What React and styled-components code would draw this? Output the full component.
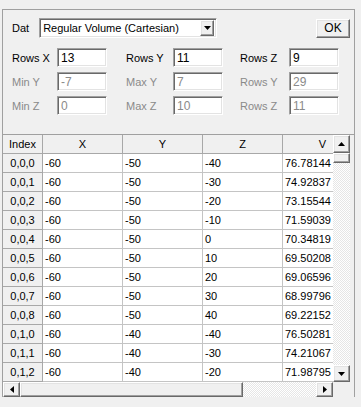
import React from "react";
import styled, { createGlobalStyle } from "styled-components";

const Global = createGlobalStyle`
  html, body {
    margin: 0;
    padding: 0;
    background: #f0f0f0;
    font-family: "Liberation Sans", Arial, sans-serif;
    font-size: 11px;
    color: #000;
  }
`;

const raised = `
  background: #f0f0f0;
  border: 1px solid;
  border-color: #fff #696969 #696969 #fff;
  box-shadow: inset -1px -1px 0 #a0a0a0, inset 1px 1px 0 #e3e3e3;
  box-sizing: border-box;
`;

const sunken = `
  background: #fff;
  border: 1px solid;
  border-color: #a0a0a0 #fff #fff #a0a0a0;
  box-shadow: inset 1px 1px 0 #696969, inset -1px -1px 0 #e3e3e3;
  box-sizing: border-box;
`;

const dither = `
  background: repeating-conic-gradient(#fff 0 25%, #e6e6e6 0 50%) 0 0 / 2px 2px;
`;

const Frame = styled.div`
  margin: 9px 6px 0 2px;
  width: 353px;
  box-sizing: border-box;
  border-top: 1px solid #a0a0a0;
  border-left: 1px solid #a0a0a0;
  border-right: 1px solid #a0a0a0;
  display: flex;
  flex-direction: column;
`;

const TopPanel = styled.div`
  height: 124px;
  box-sizing: border-box;
  padding: 8px 0 0 9px;
  display: flex;
  flex-direction: column;
  gap: 10px;
`;

const HeadRow = styled.div`
  display: flex;
  align-items: center;
`;

const Label = styled.span`
  color: ${(p) => (p.$off ? "#8a8a8a" : "#000")};
  white-space: nowrap;
`;

const Combo = styled.div`
  ${sunken}
  width: 178px;
  height: 20px;
  margin-left: 10px;
  display: flex;
  align-items: center;
  padding: 0 2px 0 3px;
`;

const ComboText = styled.span`
  flex: 1;
`;

const ArrowBtn = styled.div`
  ${raised}
  width: ${(p) => p.$w || 16}px;
  height: ${(p) => p.$h || 16}px;
  display: flex;
  align-items: center;
  justify-content: center;
  flex-shrink: 0;
`;

const OkButton = styled.button`
  ${raised}
  margin-left: auto;
  margin-right: 4px;
  width: 34px;
  height: 19px;
  padding: 0;
  font: inherit;
  font-size: 12px;
  color: #000;
`;

const Fields = styled.div`
  display: grid;
  grid-template-columns: 45px 50px 19px 47px 50px 17px 49px 50px;
  grid-auto-rows: 19px;
  row-gap: 5px;
  align-items: center;
`;

const Input = styled.div`
  ${sunken}
  height: 19px;
  padding: 1px 0 0 3px;
  display: flex;
  align-items: center;
  font-size: 12px;
  color: ${(p) => (p.$off ? "#8a8a8a" : "#000")};
`;

const GridArea = styled.div`
  border-top: 1px solid #a0a0a0;
  display: flex;
  flex-direction: column;
`;

const GridBody = styled.div`
  display: flex;
  height: 247px;
`;

const Viewport = styled.div`
  width: 330px;
  overflow: hidden;
`;

const Row = styled.div`
  display: grid;
  grid-template-columns: 40px 80px 80px 80px 80px;
  width: 360px;
  height: 19px;
`;

const Cell = styled.div`
  box-sizing: border-box;
  border-right: 1px solid ${(p) => (p.$fixed ? "#a8a8a8" : "#c4c4c4")};
  border-bottom: 1px solid ${(p) => (p.$fixed ? "#a8a8a8" : "#c4c4c4")};
  background: ${(p) => (p.$fixed ? "#f0f0f0" : "#fff")};
  display: flex;
  align-items: center;
  justify-content: ${(p) => (p.$center ? "center" : "flex-start")};
  padding-left: ${(p) => (p.$center ? 0 : 2)}px;
  white-space: nowrap;
  overflow: hidden;
`;

const VScroll = styled.div`
  width: 17px;
  display: flex;
  flex-direction: column;
  ${dither}
`;

const Track = styled.div`
  flex: 1;
`;

const VThumb = styled.div`
  ${raised}
  height: 10px;
`;

const HScrollRow = styled.div`
  display: flex;
  height: 15px;
`;

const HScroll = styled.div`
  width: 330px;
  display: flex;
  ${dither}
`;

const HThumb = styled.div`
  ${raised}
  width: 223px;
`;

const Corner = styled.div`
  width: 17px;
  background: #f0f0f0;
`;

const Tri = ({ dir }) => {
  const pts = {
    down: "0,0 7,0 3.5,4",
    up: "0,4 7,4 3.5,0",
    left: "4,0 4,7 0,3.5",
    right: "0,0 0,7 4,3.5",
  }[dir];
  const v = dir === "up" || dir === "down";
  return (
    <svg width={v ? 7 : 4} height={v ? 4 : 7} viewBox={v ? "0 0 7 4" : "0 0 4 7"}>
      <polygon points={pts} fill="#000" />
    </svg>
  );
};

const fields = [
  [["Rows X", "13"], ["Rows Y", "11"], ["Rows Z", "9"]],
  [["Min Y", "-7", true], ["Max Y", "7", true], ["Rows Y", "29", true]],
  [["Min Z", "0", true], ["Max Z", "10", true], ["Rows Z", "11", true]],
];

const rows = [
  ["0,0,0", "-60", "-50", "-40", "76.78144"],
  ["0,0,1", "-60", "-50", "-30", "74.92837"],
  ["0,0,2", "-60", "-50", "-20", "73.15544"],
  ["0,0,3", "-60", "-50", "-10", "71.59039"],
  ["0,0,4", "-60", "-50", "0", "70.34819"],
  ["0,0,5", "-60", "-50", "10", "69.50208"],
  ["0,0,6", "-60", "-50", "20", "69.06596"],
  ["0,0,7", "-60", "-50", "30", "68.99796"],
  ["0,0,8", "-60", "-50", "40", "69.22152"],
  ["0,1,0", "-60", "-40", "-40", "76.50281"],
  ["0,1,1", "-60", "-40", "-30", "74.21067"],
  ["0,1,2", "-60", "-40", "-20", "71.98795"],
];

export default function App() {
  return (
    <>
      <Global />
      <Frame>
        <TopPanel>
          <HeadRow>
            <Label>Dat</Label>
            <Combo>
              <ComboText>Regular Volume (Cartesian)</ComboText>
              <ArrowBtn $w={14} $h={16}>
                <Tri dir="down" />
              </ArrowBtn>
            </Combo>
            <OkButton>OK</OkButton>
          </HeadRow>
          <Fields>
            {fields.map((line) =>
              line.map(([label, value, off], i) => (
                <React.Fragment key={label + value}>
                  <Label $off={off}>{label}</Label>
                  <Input $off={off}>{value}</Input>
                  {i < 2 && <span />}
                </React.Fragment>
              ))
            )}
          </Fields>
        </TopPanel>
        <GridArea>
          <GridBody>
            <Viewport>
              <Row>
                {["Index", "X", "Y", "Z", "V"].map((h) => (
                  <Cell key={h} $fixed $center>
                    {h}
                  </Cell>
                ))}
              </Row>
              {rows.map((r) => (
                <Row key={r[0]}>
                  <Cell $fixed $center>
                    {r[0]}
                  </Cell>
                  {r.slice(1).map((v, i) => (
                    <Cell key={i}>{v}</Cell>
                  ))}
                </Row>
              ))}
            </Viewport>
            <VScroll>
              <ArrowBtn $w={17} $h={18}>
                <Tri dir="up" />
              </ArrowBtn>
              <VThumb />
              <Track />
              <ArrowBtn $w={17} $h={17}>
                <Tri dir="down" />
              </ArrowBtn>
            </VScroll>
          </GridBody>
          <HScrollRow>
            <HScroll>
              <ArrowBtn $w={17} $h={15}>
                <Tri dir="left" />
              </ArrowBtn>
              <HThumb />
              <Track />
              <ArrowBtn $w={17} $h={15}>
                <Tri dir="right" />
              </ArrowBtn>
            </HScroll>
            <Corner />
          </HScrollRow>
        </GridArea>
      </Frame>
    </>
  );
}
